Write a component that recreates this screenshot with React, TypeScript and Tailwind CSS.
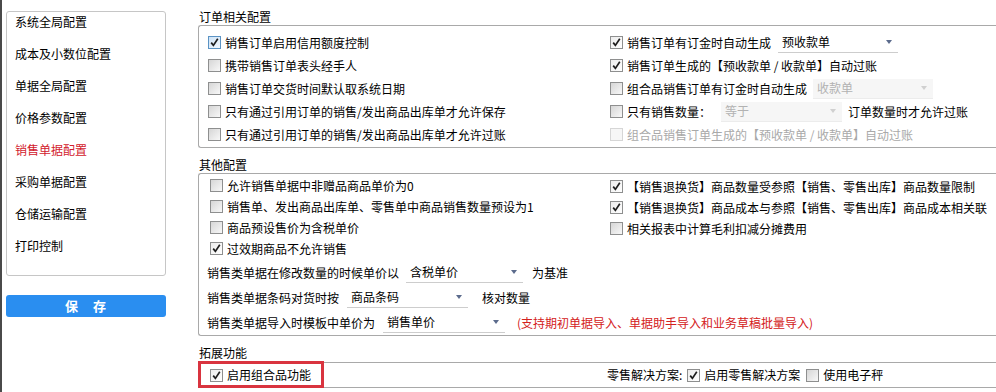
import React from "react";

type BoxProps = { on?: boolean; focus?: boolean; off?: boolean };

function Tick({ on, focus, off }: BoxProps) {
  const frame = focus
    ? "border-[#5b93c4] bg-gradient-to-br from-[#cfe3f6] to-[#f2f8fe]"
    : off
      ? "border-[#d6d6d6] bg-[#f6f6f6]"
      : on
        ? "border-[#8e8f8f] bg-gradient-to-br from-[#ececec] to-white"
        : "border-[#8e8f8f] bg-gradient-to-br from-[#d6d6d6] to-[#f8f8f8]";
  return (
    <span className={`flex h-[13px] w-[13px] shrink-0 items-center justify-center border ${frame}`}>
      {on && (
        <svg viewBox="0 0 11 11" className="h-[11px] w-[11px]">
          <path d="M2.2 5.6 L4.4 8.4 L8.8 1.8" fill="none" stroke="#1d1d1d" strokeWidth="1.7" />
        </svg>
      )}
    </span>
  );
}

function Opt({ on, focus, off, children, h = "h-[23px]" }: BoxProps & { children: React.ReactNode; h?: string }) {
  return (
    <div className={`flex items-center gap-[4px] whitespace-nowrap ${h} ${off ? "text-[#a9a9a9]" : ""}`}>
      <Tick on={on} focus={focus} off={off} />
      {children}
    </div>
  );
}

function Pick({ value, w, off }: { value: string; w: string; off?: boolean }) {
  return (
    <span
      className={`flex h-[20px] shrink-0 items-center justify-between border-b pl-[4px] pr-[6px] ${w} ${
        off ? "border-[#ececec] bg-[#f6f6f6] text-[#b2b2b2]" : "border-[#cdcdcd]"
      }`}
    >
      {value}
      <svg width="6" height="4" viewBox="0 0 6 4">
        <path d="M0 0h6L3 4z" fill={off ? "#d0d0d0" : "#5b6b8c"} />
      </svg>
    </span>
  );
}

const Title = ({ children, h }: { children: React.ReactNode; h: string }) => (
  <div className={`${h} pl-[1px] pt-[10px] leading-[14px]`}>{children}</div>
);

const menu = ["系统全局配置", "成本及小数位配置", "单据全局配置", "价格参数配置", "销售单据配置", "采购单据配置", "仓储运输配置", "打印控制"];

export default function App() {
  return (
    <div className="flex h-[392px] w-[996px] overflow-hidden bg-white font-['Noto_Sans_CJK_SC',sans-serif] text-[12px] text-black">
      <div className="w-[2px] shrink-0 bg-[#4a4a4a]" />
      <aside className="ml-[4px] w-[160px] shrink-0 pt-[11px]">
        <div className="flex flex-col gap-[12px] rounded-[3px] border border-[#c6c6c6] px-[8px] pb-[19px]">
          {menu.map((m) => (
            <div key={m} className={`h-[20px] leading-[20px] ${m === "销售单据配置" ? "text-[#d2202c]" : ""}`}>
              {m}
            </div>
          ))}
        </div>
        <button className="mt-[19px] flex h-[22px] w-full items-center justify-center rounded-[3px] bg-[#2a8ef0] text-[13px] font-bold tracking-[1px] text-white">
          保　存
        </button>
      </aside>

      <main className="ml-[32px] flex-1">
        <Title h="h-[25px]">订单相关配置</Title>
        <div className="flex rounded-l-[3px] border-y border-l border-[#a9a9a9] pb-[1px] pl-[9px] pt-[5px]">
          <div className="w-[402px]">
            <Opt on focus>销售订单启用信用额度控制</Opt>
            <Opt>携带销售订单表头经手人</Opt>
            <Opt>销售订单交货时间默认取系统日期</Opt>
            <Opt>只有通过引用订单的销售/发出商品出库单才允许保存</Opt>
            <Opt>只有通过引用订单的销售/发出商品出库单才允许过账</Opt>
          </div>
          <div>
            <Opt on>
              销售订单有订金时自动生成
              <span className="ml-[3px]">
                <Pick value="预收款单" w="w-[120px]" />
              </span>
            </Opt>
            <Opt on>销售订单生成的【预收款单 / 收款单】自动过账</Opt>
            <Opt>
              组合品销售订单有订金时自动生成
              <span className="ml-[2px]">
                <Pick value="收款单" w="w-[120px]" off />
              </span>
            </Opt>
            <Opt>
              只有销售数量：
              <span className="ml-[6px] mr-[2px]">
                <Pick value="等于" w="w-[121px]" off />
              </span>
              订单数量时才允许过账
            </Opt>
            <Opt off>组合品销售订单生成的【预收款单 / 收款单】自动过账</Opt>
          </div>
        </div>

        <Title h="h-[25px]">其他配置</Title>
        <div className="rounded-l-[3px] border-y border-l border-[#a9a9a9] pt-[1px]">
          <div className="mb-[1px] flex pl-[11px]">
            <div className="w-[400px]">
              <Opt h="h-[21px]">允许销售单据中非赠品商品单价为0</Opt>
              <Opt h="h-[21px]">销售单、发出商品出库单、零售单中商品销售数量预设为1</Opt>
              <Opt h="h-[21px]">商品预设售价为含税单价</Opt>
              <Opt h="h-[21px]" on>过效期商品不允许销售</Opt>
            </div>
            <div className="pt-[1px]">
              <Opt h="h-[21px]" on>【销售退换货】商品数量受参照【销售、零售出库】商品数量限制</Opt>
              <Opt h="h-[21px]" on>【销售退换货】商品成本与参照【销售、零售出库】商品成本相关联</Opt>
              <Opt h="h-[21px]">相关报表中计算毛利扣减分摊费用</Opt>
            </div>
          </div>
          <div className="pl-[8px]">
            <div className="flex h-[25px] items-center whitespace-nowrap">
              销售类单据在修改数量的时候单价以
              <span className="ml-[7px] mr-[9px]">
                <Pick value="含税单价" w="w-[117px]" />
              </span>
              为基准
            </div>
            <div className="flex h-[25px] items-center whitespace-nowrap">
              销售类单据条码对货时按
              <span className="ml-[8px] mr-[14px]">
                <Pick value="商品条码" w="w-[121px]" />
              </span>
              核对数量
            </div>
            <div className="flex h-[25px] items-center whitespace-nowrap">
              销售类单据导入时模板中单价为
              <span className="ml-[8px] mr-[12px]">
                <Pick value="销售单价" w="w-[122px]" />
              </span>
              <span className="text-[#d42020]">(支持期初单据导入、单据助手导入和业务草稿批量导入)</span>
            </div>
          </div>
        </div>

        <Title h="h-[26px]">拓展功能</Title>
        <div className="relative flex h-[26px] items-center border-y border-l border-[#a9a9a9]">
          <div className="w-[408px] pl-[11px]">
            <Opt on h="h-[24px]">启用组合品功能</Opt>
          </div>
          <div className="flex items-center gap-[4px] whitespace-nowrap">
            零售解决方案:
            <span className="ml-[1px]">
              <Opt on h="h-[24px]">
                启用零售解决方案
                <span className="ml-[2px]">
                  <Opt h="h-[24px]">使用电子秤</Opt>
                </span>
              </Opt>
            </span>
          </div>
          <div className="pointer-events-none absolute -left-[1px] -top-[2px] h-[27px] w-[126px] border-[3px] border-[#d9343f]" />
        </div>
      </main>
    </div>
  );
}
